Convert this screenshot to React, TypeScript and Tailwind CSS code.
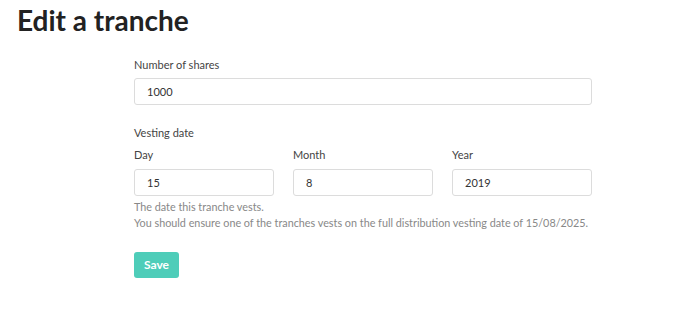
import React from "react";

function Field({ value }: { value: string }) {
  return (
    <input
      readOnly
      value={value}
      className="block h-[27px] w-full rounded-[3px] border border-[#dcdcdc] bg-white pl-[12px] text-[11px] text-[#333] outline-none font-['Lato',sans-serif]"
    />
  );
}

export default function App() {
  return (
    <div className="w-[688px] h-[316px] bg-white font-['Lato',sans-serif] text-[#444]">
      <h1 className="pt-[3px] pl-[17px] text-[28px] leading-[34px] font-bold text-[#222]">Edit a tranche</h1>
      <div className="ml-[134px] w-[458px]">
        <div className="mt-[20px] text-[11px] leading-[16px]">Number of shares</div>
        <div className="mt-[5px]">
          <Field value="1000" />
        </div>
        <div className="mt-[20px] text-[11px] leading-[16px]">Vesting date</div>
        <div className="mt-[6px] grid grid-cols-3 gap-x-[19px]">
          <div>
            <div className="text-[11px] leading-[16px]">Day</div>
            <div className="mt-[6px]">
              <Field value="15" />
            </div>
          </div>
          <div>
            <div className="text-[11px] leading-[16px]">Month</div>
            <div className="mt-[6px]">
              <Field value="8" />
            </div>
          </div>
          <div>
            <div className="text-[11px] leading-[16px]">Year</div>
            <div className="mt-[6px]">
              <Field value="2019" />
            </div>
          </div>
        </div>
        <div className="mt-[3px] whitespace-nowrap text-[10.8px] leading-[16px] text-[#888]">
          <div>The date this tranche vests.</div>
          <div>You should ensure one of the tranches vests on the full distribution vesting date of 15/08/2025.</div>
        </div>
        <button className="mt-[21px] h-[26px] w-[45px] rounded-[3px] bg-[#4ecdb9] text-[12px] font-bold text-white">
          Save
        </button>
      </div>
    </div>
  );
}
